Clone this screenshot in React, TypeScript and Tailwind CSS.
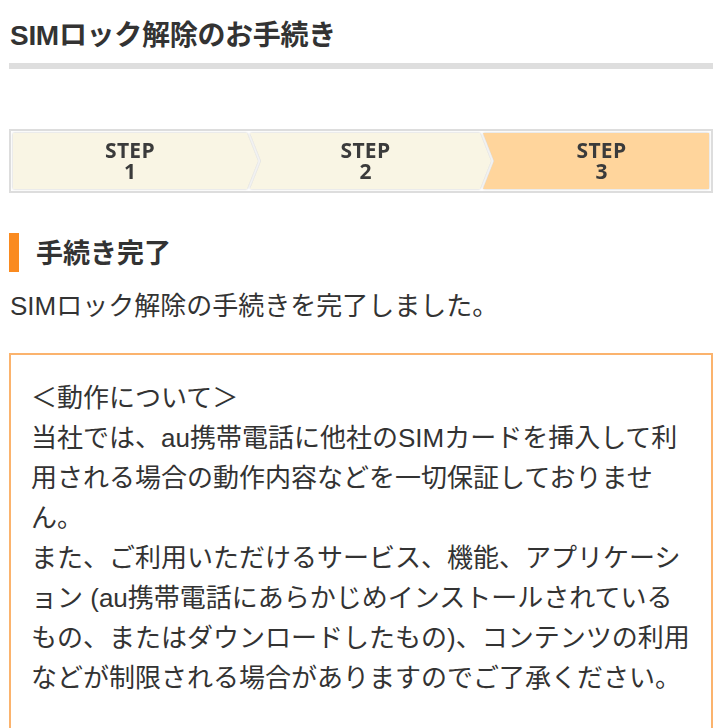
const steps = [
  { n: 1, active: false },
  { n: 2, active: false },
  { n: 3, active: true },
];

function StepBar() {
  return (
    <div className="mt-[60px] border-2 border-[#dddddd] bg-white p-[2px]">
      <div className="flex h-[56px]">
        {steps.map((s, i) => {
          const shape =
            i === 0
              ? "[clip-path:polygon(0_0,calc(100%_-_11px)_0,100%_50%,calc(100%_-_11px)_100%,0_100%)]"
              : i === steps.length - 1
                ? "[clip-path:polygon(0_0,100%_0,100%_100%,0_100%,11px_50%)]"
                : "[clip-path:polygon(0_0,calc(100%_-_11px)_0,100%_50%,calc(100%_-_11px)_100%,0_100%,11px_50%)]";
          const width = i === 0 ? "w-[245px]" : i === 1 ? "w-[241px] -ml-[8px]" : "flex-1 -ml-[8px]";
          return (
            <div key={s.n} className={`${width} h-full [filter:drop-shadow(0_0_1px_#c4c4c4)]`}>
              <div
                className={`${shape} ${s.active ? "bg-[#ffd59c]" : "bg-[#f9f5e4]"} ${
                  i === 0 ? "pr-[11px]" : i === 1 ? "pr-[21px] pl-[11px]" : "pl-[11px]"
                } flex h-full flex-col items-center justify-center text-[21px] leading-[21px] font-bold text-[#3b3b3b] [font-family:'Open_Sans',sans-serif]`}
              >
                <span className="tracking-[0.3px]">STEP</span>
                <span>{s.n}</span>
              </div>
            </div>
          );
        })}
      </div>
    </div>
  );
}

export default function App() {
  return (
    <div className="min-h-screen bg-white pr-[15px] pl-[9px] text-[#333333] [font-family:'Liberation_Sans','Noto_Sans_CJK_JP',sans-serif]">
      {/* Page title */}
      <h1 className="mt-[18px] pl-[1px] text-[28px] leading-[36px] font-bold tracking-[-0.3px] text-[#333]">
        SIMロック解除のお手続き
      </h1>
      <div className="mt-[9px] h-[6px] bg-[#dedede]" />

      <StepBar />

      {/* Section heading */}
      <div className="mt-[40px] flex h-[39px] items-center">
        <div className="h-full w-[10px] bg-[#fa8a1f]" />
        <h2 className="ml-[17px] pt-[3px] text-[27px] leading-[39px] font-bold text-[#333]">手続き完了</h2>
      </div>

      <p className="mt-[14px] pl-[1px] text-[26px] leading-[40px]">SIMロック解除の手続きを完了しました。</p>

      {/* Notice box */}
      <div className="mt-[27px] border-2 border-[#fbb36d] px-[20px] pt-[23px] pb-[40px] text-[26px] leading-[40px] text-[#333]">
        <p>＜動作について＞</p>
        <p>
          当社では、au携帯電話に他社のSIMカードを挿入して利用される場合の動作内容などを一切保証しておりません。
        </p>
        <p>
          また、ご利用いただけるサービス、機能、アプリケーション (au携帯電話にあらかじめインストールされているもの、またはダウンロードしたもの)、コンテンツの利用などが制限される場合がありますのでご了承ください。
        </p>
      </div>
    </div>
  );
}
